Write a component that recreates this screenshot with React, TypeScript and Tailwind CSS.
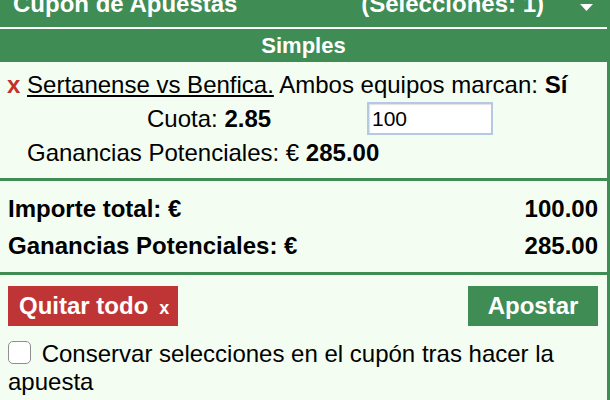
import React from 'react';

const GREEN = 'bg-[#3f8c55]';

const App: React.FC = () => {
  return (
    <div className="w-[610px] h-[400px] overflow-hidden bg-white font-['Liberation_Sans',Arial,sans-serif] text-black">
      <div className="min-h-[400px] border-r-[3px] border-[#3f8c55] bg-[#f4fdf2]">
        {/* coupon header, cut at the top of the viewport */}
        <div className={`h-[27px] overflow-hidden ${GREEN} text-white`}>
          <div className="-mt-[10px] flex items-start text-[24px] font-bold leading-[28px]">
            <span className="ml-[13px]">Cupon de Apuestas</span>
            <span className="ml-auto">(Selecciones: 1)</span>
            <svg className="ml-[36px] mr-[14px] mt-[14px]" width="13" height="7" viewBox="0 0 13 7">
              <polygon points="0,0 13,0 6.5,7" fill="#ffffff" />
            </svg>
          </div>
        </div>

        <div className={`h-[35px] border-t-2 border-white ${GREEN} flex items-center justify-center text-[22px] font-bold text-white`}>
          Simples
        </div>

        {/* selection */}
        <div className="pt-[8px] pb-[10px] text-[24px]">
          <div className="h-[30px] leading-[30px] pl-[7px] whitespace-nowrap">
            <span className="font-bold text-[#c4302b]">x</span>{' '}
            <span className="underline">Sertanense vs Benfica.</span> Ambos equipos marcan: <b>Sí</b>
          </div>
          <div className="mt-[2px] flex items-center h-[33px]">
            <span className="ml-[147px] w-[220px] leading-[30px]">
              Cuota: <b>2.85</b>
            </span>
            <input
              readOnly
              value="100"
              className="w-[126px] h-[33px] border-2 border-[#b4c9e4] bg-white px-[3px] text-[21px] outline-none shadow-[inset_1px_1px_1px_rgba(0,0,0,0.12)]"
            />
          </div>
          <div className="mt-[3px] h-[30px] leading-[30px] pl-[27px]">
            Ganancias Potenciales: € <b>285.00</b>
          </div>
        </div>

        {/* totals */}
        <div className="border-t-[3px] border-[#3f8c55] pt-[9px] pb-[8px] pl-[8px] pr-[9px] text-[24px] font-bold">
          <div className="h-[37px] flex items-center justify-between">
            <span>Importe total: €</span>
            <span>100.00</span>
          </div>
          <div className="h-[37px] flex items-center justify-between">
            <span>Ganancias Potenciales: €</span>
            <span>285.00</span>
          </div>
        </div>

        {/* actions */}
        <div className="border-t-[3px] border-[#3f8c55] pt-[11px] pl-[8px] pr-[9px]">
          <div className="flex justify-between">
            <button className="h-[40px] pl-[11px] pr-[9px] bg-[#bf3535] text-white font-bold text-[24px] leading-[40px]">
              Quitar todo<span className="ml-[11px] text-[18px]">x</span>
            </button>
            <button className={`h-[40px] w-[130px] ${GREEN} text-white font-bold text-[24px]`}>Apostar</button>
          </div>
          <div className="mt-[14px] text-[24px] leading-[28px]">
            <input
              type="checkbox"
              className="appearance-none inline-block w-[23px] h-[23px] mr-[4px] align-[-2px] rounded-[5px] border border-[#909090] bg-white"
            />{' '}
            Conservar selecciones en el cupón tras hacer la apuesta
          </div>
        </div>
      </div>
    </div>
  );
};

export default App;
